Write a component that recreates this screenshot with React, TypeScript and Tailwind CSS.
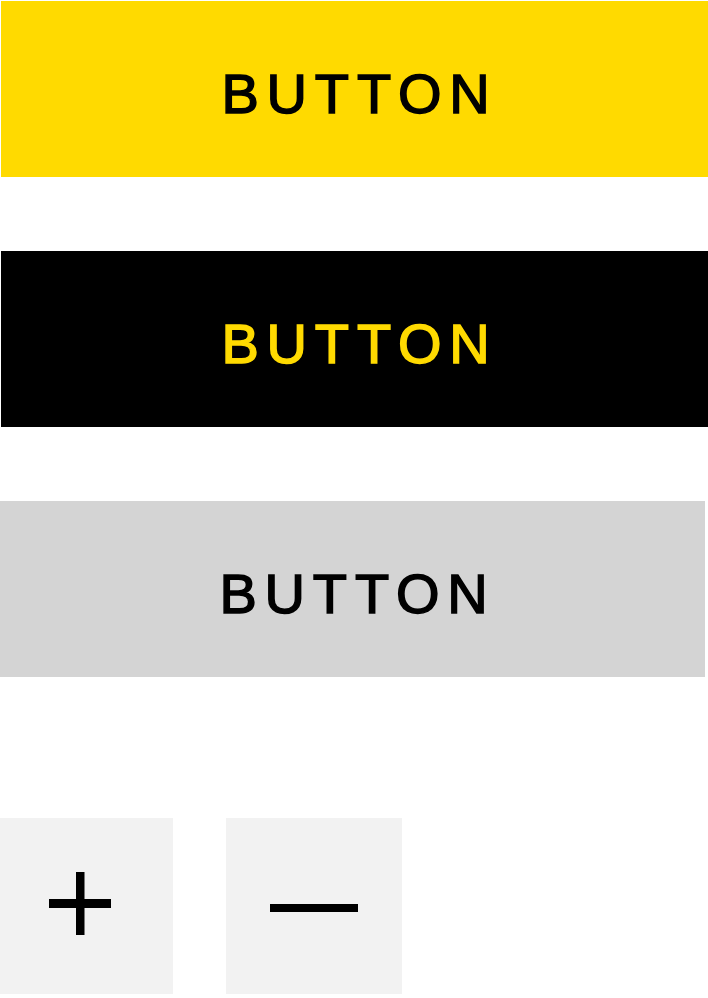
const label = "BUTTON";

function Btn({ className, text }: { className: string; text: string }) {
  return (
    <div className={`flex h-[176px] items-center justify-center pl-[10px] pt-[9px] ${className}`}>
      <span
        className={`font-['Liberation_Sans',Arial,sans-serif] text-[56px] font-normal leading-none tracking-[0.14em] [-webkit-text-stroke:1.5px_currentColor] ${text}`}
      >
        {label}
      </span>
    </div>
  );
}

export default function App() {
  return (
    <div className="min-h-[998px] w-[708px] bg-white">
      <div className="pt-[1px]">
        <Btn className="ml-[1px] h-[175px] w-[707px] bg-[#ffda00]" text="text-black" />
        <Btn className="ml-[1px] mt-[74px] w-[707px] bg-black" text="text-[#ffda00]" />
        <Btn className="mt-[74px] w-[705px] bg-[#d4d4d4]" text="text-black" />
      </div>

      {/* stepper buttons */}
      <div className="mt-[141px] flex">
        <div className="h-[176px] w-[173px] bg-[#f2f2f2]">
          <svg width="173" height="176" viewBox="0 0 173 176">
            <rect x="49" y="81" width="62" height="9" fill="#000" />
            <rect x="76" y="54" width="8.5" height="63" fill="#000" />
          </svg>
        </div>
        <div className="ml-[53px] h-[176px] w-[176px] bg-[#f2f2f2]">
          <svg width="176" height="176" viewBox="0 0 176 176">
            <rect x="44" y="86" width="88" height="8" fill="#000" />
          </svg>
        </div>
      </div>
    </div>
  );
}
